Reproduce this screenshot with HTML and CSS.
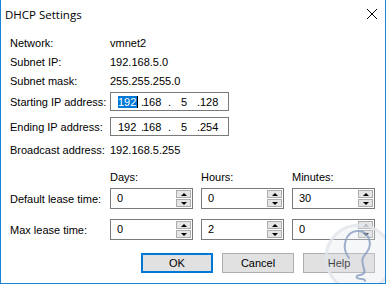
FILE: index.html
```html
<!DOCTYPE html>
<html lang="en">

<head>
    <title>DHCP Settings</title>
    <meta charset="utf-8" />
    <link rel="stylesheet" href="styles.css">
</head>

<body>
    <div class="window">
        <div class="titlebar">
            <span class="title">DHCP Settings</span>
            <span class="close">
                <svg width="12" height="12" viewBox="0 0 12 12">
                    <path d="M1 1 L11 11 M11 1 L1 11" stroke="#000" stroke-width="1" />
                </svg>
            </span>
        </div>

        <div class="content">
            <div class="row r-network"><span class="label">Network:</span><span>vmnet2</span></div>
            <div class="row r-plain"><span class="label">Subnet IP:</span><span>192.168.5.0</span></div>
            <div class="row r-plain"><span class="label">Subnet mask:</span><span>255.255.255.0</span></div>

            <div class="row r-start">
                <span class="label">Starting IP address:</span>
                <div class="ipbox">
                    <span class="oct"><span class="sel">192</span></span><span>.</span><span>168</span><span>.</span><span class="mid">5</span><span>.</span><span>128</span>
                </div>
            </div>
            <div class="row r-end">
                <span class="label">Ending IP address:</span>
                <div class="ipbox">
                    <span class="oct">192</span><span>.</span><span>168</span><span>.</span><span class="mid">5</span><span>.</span><span>254</span>
                </div>
            </div>
            <div class="row r-broadcast"><span class="label">Broadcast address:</span><span>192.168.5.255</span></div>

            <div class="row r-heads">
                <span class="label"></span>
                <div class="spins">
                    <span>Days:</span>
                    <span>Hours:</span>
                    <span>Minutes:</span>
                </div>
            </div>

            <div class="row r-default">
                <span class="label">Default lease time:</span>
                <div class="spins">
                    <div class="spin"><span class="val">0</span><div class="arrows"><span class="up"></span><span class="down"></span></div></div>
                    <div class="spin"><span class="val">0</span><div class="arrows"><span class="up"></span><span class="down"></span></div></div>
                    <div class="spin"><span class="val">30</span><div class="arrows"><span class="up"></span><span class="down"></span></div></div>
                </div>
            </div>

            <div class="row r-max">
                <span class="label">Max lease time:</span>
                <div class="spins">
                    <div class="spin"><span class="val">0</span><div class="arrows"><span class="up"></span><span class="down"></span></div></div>
                    <div class="spin"><span class="val">2</span><div class="arrows"><span class="up"></span><span class="down"></span></div></div>
                    <div class="spin"><span class="val">0</span><div class="arrows"><span class="up"></span><span class="down"></span></div></div>
                </div>
            </div>

            <div class="buttons">
                <button class="btn default">OK</button>
                <button class="btn">Cancel</button>
                <button class="btn">Help</button>
            </div>
        </div>

        <svg class="watermark" width="80" height="80" viewBox="0 0 80 80">
            <circle cx="40" cy="40" r="33" fill="rgba(225,230,238,0.35)" stroke="#e2e6ec" stroke-width="3" />
            <path d="M30 40 C22 30 26 14 38 13 C50 12 54 26 48 34 C45 38 42 40 44 47 C45 52 47 54 44 56 C40 58 36 57 38 60 C41 62 46 60 46 63"
                fill="none" stroke="#8da2c4" stroke-width="2" stroke-linecap="round" />
        </svg>
    </div>
</body>

</html>
```

FILE: styles.css
```css
body {
    margin: 0;
    background: #fff;
    font-family: "Liberation Sans", Arial, sans-serif;
    font-size: 11px;
    color: #000;
}

.window {
    position: relative;
    width: 386px;
    height: 284px;
    box-sizing: border-box;
    border: 1px solid #1883d7;
    border-top: none;
    background: #fff;
    overflow: hidden;
}

.titlebar {
    height: 27px;
    display: flex;
    align-items: center;
    justify-content: space-between;
    padding-left: 4px;
    padding-right: 7px;
}

.title {
    font-family: "Open Sans", "Noto Sans", sans-serif;
    font-size: 11.5px;
    margin-top: 1px;
}

.close {
    display: flex;
    margin-top: 1px;
}

.content {
    padding: 6px 9px 0 9px;
}

.row {
    display: flex;
    align-items: center;
    height: 19px;
}

.label {
    width: 100px;
    flex: none;
}

.r-start {
    margin-top: 2px;
}

.r-end {
    margin-top: 6px;
}

.r-broadcast {
    margin-top: 4px;
}

.r-heads {
    margin-top: 9px;
    height: 18px;
}

.r-default {
    margin-top: 2px;
    height: 21px;
}

.r-max {
    margin-top: 10px;
    height: 21px;
}

/* ip address control */
.ipbox {
    box-sizing: border-box;
    width: 119px;
    height: 19px;
    border: 1px solid #7a7a7a;
    display: grid;
    grid-template-columns: 23px 2px 25px 3px 26px 3px auto;
    align-items: center;
    padding-left: 7px;
}

.ipbox .mid {
    text-align: center;
}

.sel {
    background: #0078d7;
    color: #fff;
    padding: 0 1px 0 0;
    border-right: 1px solid #000;
}

/* spin controls */
.spins {
    display: grid;
    grid-template-columns: 83px 83px 83px;
    column-gap: 8px;
}

.spin {
    box-sizing: border-box;
    height: 21px;
    border: 1px solid #7a7a7a;
    display: flex;
    background: #fff;
}

.val {
    flex: 1;
    padding-left: 6px;
    line-height: 18px;
}

.arrows {
    width: 15px;
    display: flex;
    flex-direction: column;
    gap: 1px;
    padding: 1px 1px 1px 0;
}

.arrows span {
    flex: 1;
    border: 1px solid #adadad;
    background: #e5e5e5;
    display: flex;
    align-items: center;
    justify-content: center;
}

.arrows .up::after {
    content: "";
    border-left: 3px solid transparent;
    border-right: 3px solid transparent;
    border-bottom: 3px solid #000;
}

.arrows .down::after {
    content: "";
    border-left: 3px solid transparent;
    border-right: 3px solid transparent;
    border-top: 3px solid #000;
}

/* buttons */
.buttons {
    display: flex;
    justify-content: flex-end;
    gap: 9px;
    margin-top: 13px;
    padding-right: 1px;
}

.btn {
    width: 72px;
    height: 20px;
    box-sizing: border-box;
    border: 1px solid #adadad;
    background: #e1e1e1;
    font-family: "Liberation Sans", Arial, sans-serif;
    font-size: 11px;
    color: #000;
    padding: 0;
}

.btn.default {
    border: 2px solid #0078d7;
}

.watermark {
    position: absolute;
    right: -14px;
    bottom: -15px;
    opacity: 0.85;
}
```
